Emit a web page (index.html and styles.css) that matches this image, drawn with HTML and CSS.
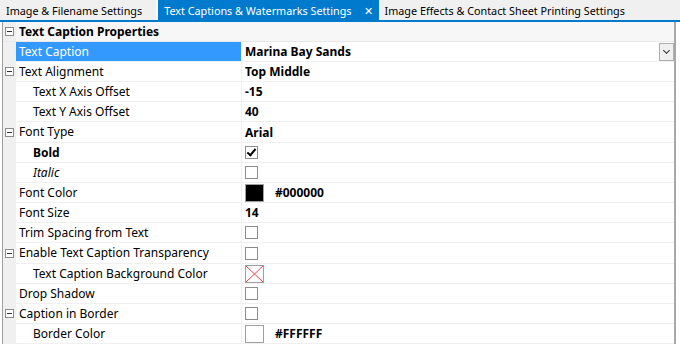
FILE: index.html
```html
<!DOCTYPE html>
<html lang="en">
<head>
    <meta charset="UTF-8">
    <title>Text Captions &amp; Watermarks Settings</title>
    <link rel="stylesheet" href="styles.css">
</head>
<body>
    <div class="tabs">
        <div class="tab">Image &amp; Filename Settings</div>
        <div class="tab active">Text Captions &amp; Watermarks Settings <span class="close">&#x2715;</span></div>
        <div class="tab">Image Effects &amp; Contact Sheet Printing Settings</div>
    </div>

    <div class="grid">
        <div class="row category">
            <div class="margin"><span class="toggle"></span></div>
            <div class="cat-label">Text Caption Properties</div>
        </div>
        <div class="row selected">
            <div class="margin"></div>
            <div class="label">Text Caption</div>
            <div class="value"><b>Marina Bay Sands</b><span class="drop"></span></div>
        </div>
        <div class="row">
            <div class="margin"><span class="toggle"></span></div>
            <div class="label">Text Alignment</div>
            <div class="value"><b>Top Middle</b></div>
        </div>
        <div class="row">
            <div class="margin"></div>
            <div class="label child">Text X Axis Offset</div>
            <div class="value"><b>-15</b></div>
        </div>
        <div class="row">
            <div class="margin"></div>
            <div class="label child">Text Y Axis Offset</div>
            <div class="value"><b>40</b></div>
        </div>
        <div class="row tall">
            <div class="margin"><span class="toggle"></span></div>
            <div class="label">Font Type</div>
            <div class="value"><b>Arial</b></div>
        </div>
        <div class="row">
            <div class="margin"></div>
            <div class="label child bold">Bold</div>
            <div class="value"><span class="check checked"></span></div>
        </div>
        <div class="row">
            <div class="margin"></div>
            <div class="label child italic">Italic</div>
            <div class="value"><span class="check"></span></div>
        </div>
        <div class="row">
            <div class="margin"></div>
            <div class="label">Font Color</div>
            <div class="value"><span class="swatch black"></span><b>#000000</b></div>
        </div>
        <div class="row">
            <div class="margin"></div>
            <div class="label">Font Size</div>
            <div class="value"><b>14</b></div>
        </div>
        <div class="row">
            <div class="margin"></div>
            <div class="label">Trim Spacing from Text</div>
            <div class="value"><span class="check"></span></div>
        </div>
        <div class="row tall">
            <div class="margin"><span class="toggle"></span></div>
            <div class="label">Enable Text Caption Transparency</div>
            <div class="value"><span class="check"></span></div>
        </div>
        <div class="row">
            <div class="margin"></div>
            <div class="label child">Text Caption Background Color</div>
            <div class="value">
                <svg class="swatch none" width="19" height="18" viewBox="0 0 19 18">
                    <rect x="0.5" y="0.5" width="18" height="17" fill="#fff" stroke="#a0a0a0"/>
                    <path d="M1 1 L18 17 M18 1 L1 17" stroke="#ff4040" stroke-width="1"/>
                </svg>
            </div>
        </div>
        <div class="row">
            <div class="margin"></div>
            <div class="label">Drop Shadow</div>
            <div class="value"><span class="check"></span></div>
        </div>
        <div class="row">
            <div class="margin"><span class="toggle"></span></div>
            <div class="label">Caption in Border</div>
            <div class="value"><span class="check"></span></div>
        </div>
        <div class="row">
            <div class="margin"></div>
            <div class="label child">Border Color</div>
            <div class="value"><span class="swatch white"></span><b>#FFFFFF</b></div>
        </div>
    </div>
</body>
</html>
```

FILE: styles.css
```css
body {
    margin: 0;
    font-family: 'Noto Sans', 'Open Sans', sans-serif;
    font-size: 12px;
    color: #000;
    background-color: #fff;
    width: 680px;
    height: 344px;
    overflow: hidden;
}
.tabs {
    display: flex;
    height: 20px;
    background-color: #f0f0f0;
    border-bottom: 2px solid #007acc;
    font-size: 10.8px;
}
.tab {
    display: flex;
    align-items: center;
    padding: 0 6px;
    white-space: nowrap;
}
.tab:first-child {
    background-color: #f0f0f0;
    border-right: 2px solid #fafafa;
    padding-right: 14px;
}
.tab.active {
    background-color: #007acc;
    color: #fff;
    padding-right: 6px;
}
.close {
    margin-left: 12px;
    font-size: 11px;
}
.grid {
    margin-left: 2px;
    width: 671px;
    border-left: 1px solid #a0a0a0;
    border-right: 2px solid #a8a8a8;
    height: 322px;
}
.row {
    display: grid;
    grid-template-columns: 13px 226px 1fr;
    height: 19px;
    border-bottom: 1px solid #f0f0f0;
    line-height: 19px;
}
.row.tall {
    height: 20px;
}
.margin {
    background-color: #f0f0f0;
    display: flex;
    align-items: center;
    justify-content: center;
}
.toggle {
    width: 7px;
    height: 7px;
    border: 1px solid #8c8c8c;
    background-color: #fff;
    position: relative;
}
.toggle::after {
    content: '';
    position: absolute;
    left: 1px;
    top: 3px;
    width: 5px;
    height: 1px;
    background-color: #333;
}
.category {
    background-color: #f7f7f7;
    border-bottom: 1px solid #e8e8e8;
}
.cat-label {
    grid-column: 2 / 4;
    font-weight: bold;
    padding-left: 3px;
}
.label {
    padding-left: 3px;
    border-right: 1px solid #f0f0f0;
    white-space: nowrap;
    overflow: hidden;
}
.label.child {
    padding-left: 17px;
}
.label.bold {
    font-weight: bold;
}
.label.italic {
    font-style: italic;
}
.selected .label {
    background-color: #3399ff;
    color: #fff;
}
.value {
    display: flex;
    align-items: center;
    padding-left: 3px;
}
.drop {
    margin-left: auto;
    margin-right: 0;
    width: 13px;
    height: 16px;
    border: 1px solid #adadad;
    background-color: #f0f0f0;
    position: relative;
}
.drop::after {
    content: '';
    position: absolute;
    left: 4px;
    top: 4px;
    width: 4px;
    height: 4px;
    border-right: 1.5px solid #333;
    border-bottom: 1.5px solid #333;
    transform: rotate(45deg);
}
.check {
    width: 11px;
    height: 11px;
    border: 1px solid #8c8c8c;
    background-color: #fff;
    position: relative;
}
.check.checked::after {
    content: '';
    position: absolute;
    left: 3px;
    top: 0;
    width: 3px;
    height: 7px;
    border-right: 2px solid #000;
    border-bottom: 2px solid #000;
    transform: rotate(40deg);
}
.swatch {
    width: 17px;
    height: 16px;
    border: 1px solid #a0a0a0;
    margin-right: 11px;
}
.swatch.black {
    background-color: #000;
}
.swatch.white {
    background-color: #fff;
}
svg.swatch {
    border: none;
    width: 19px;
    height: 18px;
}
```
